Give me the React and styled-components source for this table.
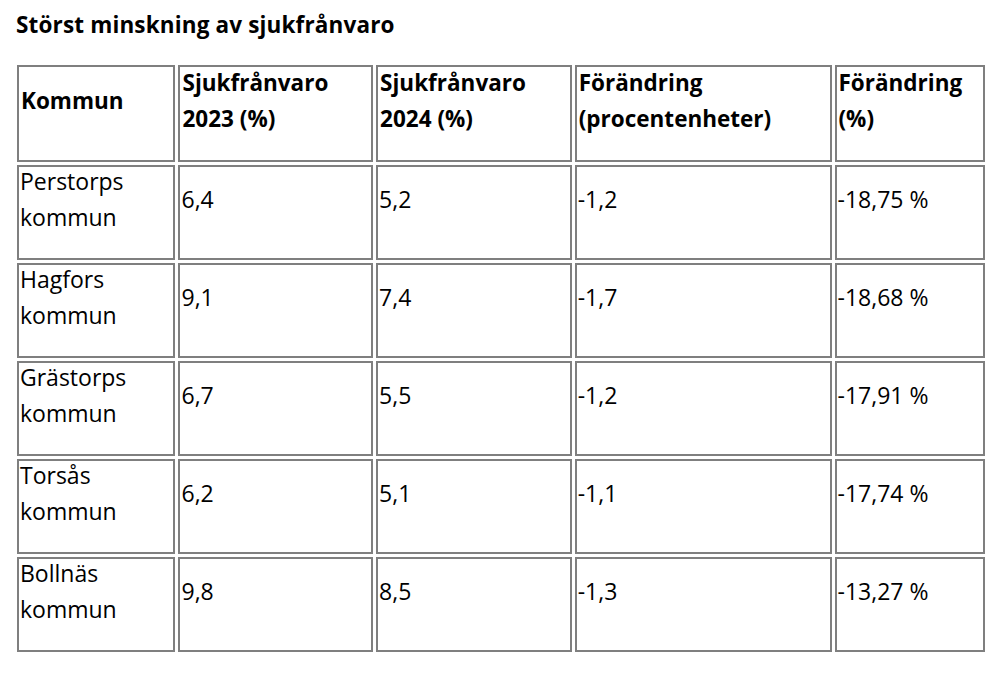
import React from 'react';
import styled, { createGlobalStyle } from 'styled-components';

const GlobalStyle = createGlobalStyle`
  body {
    margin: 0;
    background: #fff;
    color: #000;
    font-family: "Open Sans", "Liberation Sans", Arial, sans-serif;
  }
`

const Page = styled.div`
  padding: 10px 14px 0 14px;
  width: 1000px;
  box-sizing: border-box;
`

const Title = styled.h2`
  margin: 0 0 22px 2px;
  font-size: 22.5px;
  letter-spacing: 0.15px;
  font-weight: 700;
  line-height: 30px;
`

const Table = styled.table`
  border-collapse: separate;
  border-spacing: 3px;
  table-layout: fixed;
  width: 974px;
`

const HeadCell = styled.th`
  border: 2px solid #7f7f7f;
  padding: 0 1px 0 2px;
  vertical-align: middle;
  text-align: left;
  font-size: 22.5px;
  line-height: 36px;
  font-weight: 700;

  p {
    margin: -2px 0 23px 0;
  }
`

const Cell = styled.td`
  border: 2px solid #7f7f7f;
  padding: 0 1px 0 1px;
  vertical-align: middle;
  font-size: 23px;
  line-height: 36px;
  font-weight: 400;

  p {
    margin: -4px 0 23px 0;
  }
`

const columns = [
  { label: ['Kommun'], width: 158 },
  { label: ['Sjukfrånvaro', '2023 (%)'], width: 194 },
  { label: ['Sjukfrånvaro', '2024 (%)'], width: 195 },
  { label: ['Förändring', '(procentenheter)'], width: 256 },
  { label: ['Förändring', '(%)'], width: 150 },
]

const rows = [
  [['Perstorps', 'kommun'], '6,4', '5,2', '-1,2', '-18,75 %'],
  [['Hagfors', 'kommun'], '9,1', '7,4', '-1,7', '-18,68 %'],
  [['Grästorps', 'kommun'], '6,7', '5,5', '-1,2', '-17,91 %'],
  [['Torsås', 'kommun'], '6,2', '5,1', '-1,1', '-17,74 %'],
  [['Bollnäs', 'kommun'], '9,8', '8,5', '-1,3', '-13,27 %'],
]

const Lines = ({ lines }) => (
  <p>
    {lines.map((l, i) => (
      <React.Fragment key={i}>
        {i > 0 && <br />}
        {l}
      </React.Fragment>
    ))}
  </p>
)

export default function App() {
  return (
    <Page>
      <GlobalStyle />
      <Title>Störst minskning av sjukfrånvaro</Title>
      <Table>
        <colgroup>
          {columns.map((c, i) => (
            <col key={i} style={{ width: c.width }} />
          ))}
        </colgroup>
        <thead>
          <tr>
            {columns.map((c, i) => (
              <HeadCell key={i}>
                <Lines lines={c.label} />
              </HeadCell>
            ))}
          </tr>
        </thead>
        <tbody>
          {rows.map(r => (
            <tr key={r[0][0]}>
              {r.map((v, i) => (
                <Cell key={i}>
                  <Lines lines={Array.isArray(v) ? v : [v]} />
                </Cell>
              ))}
            </tr>
          ))}
        </tbody>
      </Table>
    </Page>
  )
}
